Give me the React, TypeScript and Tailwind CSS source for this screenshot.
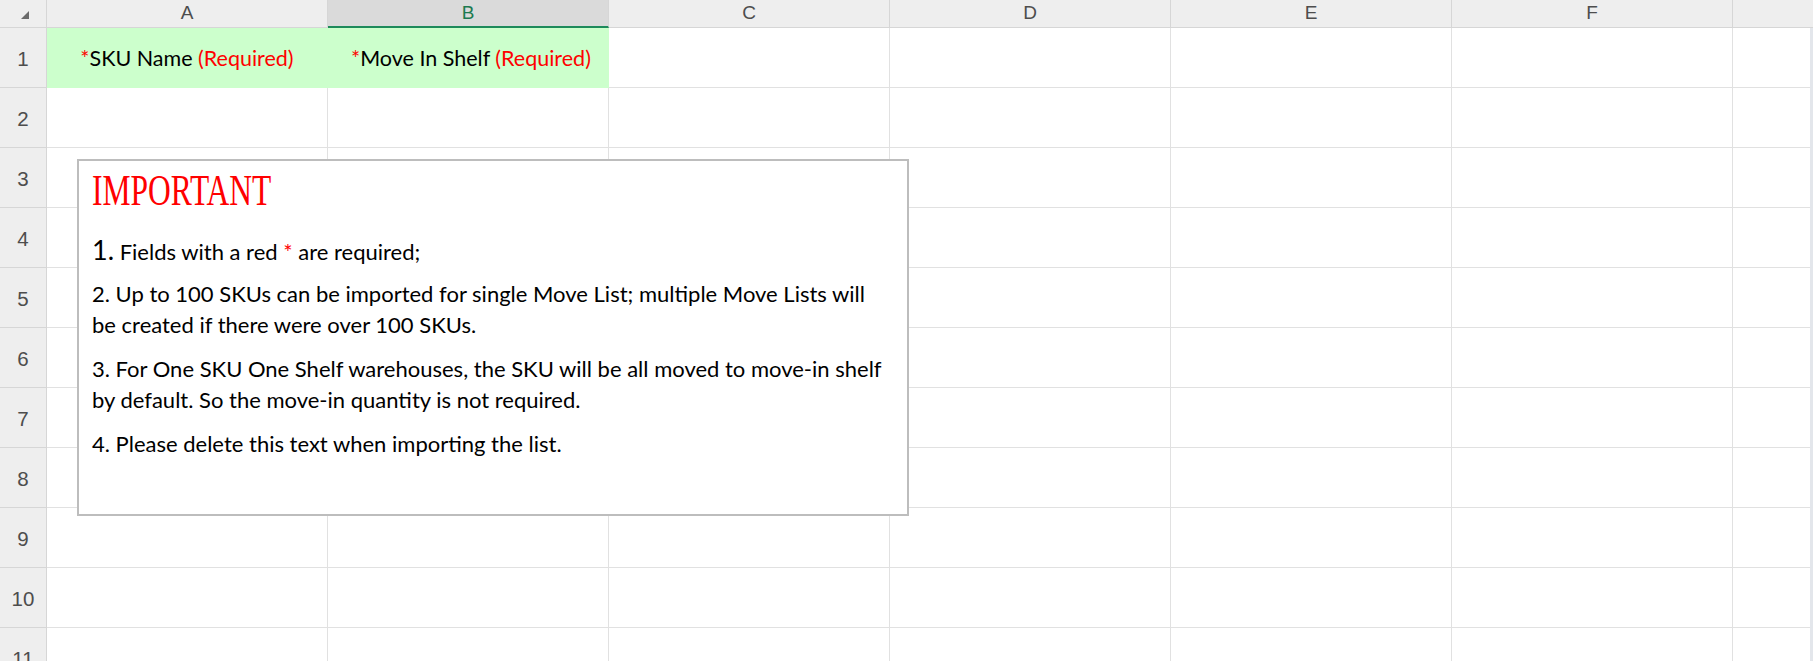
import React from "react";

const COLS = ["A", "B", "C", "D", "E", "F"];
const ROWS = [1, 2, 3, 4, 5, 6, 7, 8, 9, 10, 11];

function HeaderRow() {
  return (
    <div className="flex h-[28px] bg-[#eeeeee]">
      <div className="relative w-[47px] shrink-0 border-r border-b border-[#d6d6d6]">
        <svg className="absolute left-[20px] top-[10px]" width="10" height="10" viewBox="0 0 10 10">
          <polygon points="9,1 9,9 1,9" fill="#6b6b6b" />
        </svg>
      </div>
      {COLS.map((c) => (
        <div
          key={c}
          className={
            c === "B"
              ? "w-[281px] shrink-0 flex items-center justify-center border-r border-[#d6d6d6] bg-[#dadada] border-b-2 border-b-[#1d8a5a] text-[#1d7a50] text-[19px] font-['Liberation_Sans',sans-serif]"
              : "w-[281px] shrink-0 flex items-center justify-center border-r border-b border-[#d6d6d6] text-[#4d4d4d] text-[19px] font-['Liberation_Sans',sans-serif]"
          }
        >
          {c}
        </div>
      ))}
      <div className="flex-1 border-b border-[#d6d6d6]" />
    </div>
  );
}

function Row({ n }: { n: number }) {
  return (
    <div className="flex h-[60px] shrink-0">
      <div className="w-[47px] shrink-0 flex items-center justify-center pt-[3px] bg-[#eeeeee] border-r border-b border-[#d6d6d6] text-[#4d4d4d] text-[20.5px] font-['Liberation_Sans',sans-serif]">
        {n}
      </div>
      {COLS.map((c, i) => {
        const green = n === 1 && i < 2;
        return (
          <div
            key={c}
            className={
              green
                ? "w-[281px] shrink-0 flex items-center justify-center pt-[2px] bg-[#ccffcc] border-r border-b border-[#ccffcc] text-[21.5px] text-black font-['Lato',sans-serif] whitespace-nowrap"
                : "w-[281px] shrink-0 border-r border-b border-[#e1e1e1]"
            }
          >
            {green && i === 0 && (
              <span>
                <span className="text-[#ff0000]">*</span>SKU Name <span className="text-[#ff0000]">(Required)</span>
              </span>
            )}
            {green && i === 1 && (
              <span className="pl-[6px]">
                <span className="text-[#ff0000]">*</span>Move In Shelf <span className="text-[#ff0000]">(Required)</span>
              </span>
            )}
          </div>
        );
      })}
      <div className="flex-1 border-b border-[#e1e1e1]" />
    </div>
  );
}

function NoteBox() {
  return (
    <div className="absolute left-[77px] top-[159px] w-[832px] h-[357px] bg-white border-2 border-[#bdbdbd] px-[13px] pt-[5px] font-['Lato',sans-serif] text-black">
      <div className="h-[48px] leading-[48px] text-[45px] font-light text-[#ff0000] font-['Liberation_Serif',serif] origin-left scale-x-[0.7] whitespace-nowrap">
        IMPORTANT
      </div>
      <div className="mt-[20px] text-[22px] leading-[31px] whitespace-nowrap">
        <p className="h-[31px]">
          <span className="text-[27px] leading-[31px]">1.</span> Fields with a red <span className="text-[#ff0000]">*</span> are required;
        </p>
        <p className="mt-[13px]">
          2. Up to 100 SKUs can be imported for single Move List; multiple Move Lists will
          <br />
          be created if there were over 100 SKUs.
        </p>
        <p className="mt-[13px]">
          3. For One SKU One Shelf warehouses, the SKU will be all moved to move-in shelf
          <br />
          by default. So the move-in quantity is not required.
        </p>
        <p className="mt-[13px]">4. Please delete this text when importing the list.</p>
      </div>
    </div>
  );
}

export default function App() {
  return (
    <div className="relative w-[1813px] h-[661px] overflow-hidden bg-white">
      <div className="flex flex-col">
        <HeaderRow />
        {ROWS.map((n) => (
          <Row key={n} n={n} />
        ))}
      </div>
      <div className="absolute right-0 top-[28px] bottom-0 w-[3px] bg-[#e3e6eb]" />
      <NoteBox />
    </div>
  );
}
